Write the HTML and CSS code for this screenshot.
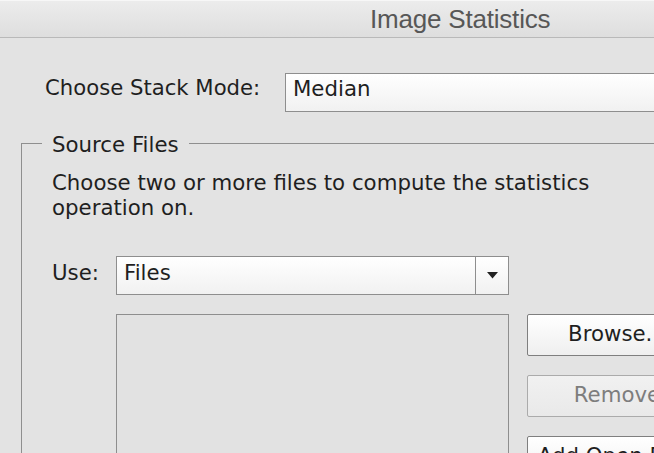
FILE: index.html
```html
<!DOCTYPE html>
<html>
<head>
<meta charset="utf-8">
<link rel="stylesheet" href="styles.css">
</head>
<body>
<div class="window">
  <div class="titlebar"><span class="title">Image Statistics</span></div>
  <div class="content">
    <div class="mode-row">
      <span class="mode-label">Choose Stack Mode:</span>
      <div class="select mode-select">Median</div>
    </div>
    <fieldset class="source">
      <legend class="source-legend">Source Files</legend>
      <p class="desc">Choose two or more files to compute the statistics<br>operation on.</p>
      <div class="files-grid">
        <span class="use-label">Use:</span>
        <div class="select use-select">
          <span class="use-value">Files</span>
          <span class="arrow-box"><svg width="11" height="7" viewBox="0 0 11 7"><path d="M0 0H11L5.5 6.5Z" fill="#222"/></svg></span>
        </div>
        <div class="file-list"></div>
        <div class="buttons">
          <div class="btn">Browse...</div>
          <div class="btn btn-disabled">Remove</div>
          <div class="btn">Add Open Files</div>
        </div>
      </div>
    </fieldset>
  </div>
</div>
</body>
</html>
```
FILE: styles.css
```css
html, body {
  margin: 0;
  padding: 0;
}
body {
  width: 654px;
  height: 453px;
  overflow: hidden;
  background: #e3e3e3;
  font-family: "DejaVu Sans", "Liberation Sans", sans-serif;
  color: #1f1f1f;
}
.window {
  width: 900px;
}
.titlebar {
  height: 38px;
  border-top: 1px solid #f7f7f7;
  box-sizing: border-box;
  border-bottom: 1px solid #b9b9b9;
  background: linear-gradient(#ececec, #dedede);
  padding-left: 370px;
}
.title {
  font-family: "Liberation Sans", Arial, sans-serif;
  font-size: 26px;
  line-height: 37px;
  color: #575757;
  letter-spacing: -0.2px;
}
.content {
  padding-top: 35px;
}
.mode-row {
  display: flex;
  align-items: flex-start;
  padding-left: 45px;
}
.mode-label {
  width: 240px;
  font-size: 21.2px;
  line-height: 24px;
  margin-top: 3px;
}
.select {
  box-sizing: border-box;
  height: 39px;
  border: 1px solid #8e8e8e;
  background: linear-gradient(#ffffff, #f1f1f1);
  font-size: 21.3px;
  line-height: 24px;
}
.mode-select {
  width: 420px;
  padding: 3px 0 0 7px;
}
.source {
  margin: 18px 0 0 21px;
  padding: 0 0 0 30px;
  border: 1px solid #8f8f8f;
  width: 800px;
  height: 400px;
  box-sizing: border-box;
}
.source-legend {
  margin-left: -10px;
  padding: 3px 10px 0;
  font-size: 21.3px;
  line-height: 24px;
}
.desc {
  margin: 13px 0 0;
  font-size: 21.3px;
  line-height: 25px;
}
.files-grid {
  display: grid;
  grid-template-columns: 64px 393px 18px 180px;
  row-gap: 19px;
  margin-top: 36px;
}
.use-label {
  font-size: 21.3px;
  line-height: 24px;
  padding-top: 5px;
}
.use-select {
  display: flex;
  padding: 0;
}
.use-value {
  flex: 1;
  padding: 4px 0 0 7px;
}
.arrow-box {
  width: 32px;
  border-left: 1px solid #8e8e8e;
  display: flex;
  align-items: center;
  justify-content: center;
}
.file-list {
  grid-column: 2;
  height: 160px;
  border: 1px solid #8e8e8e;
  background: #e2e2e2;
}
.buttons {
  grid-column: 4;
  display: flex;
  flex-direction: column;
  gap: 19px;
}
.btn {
  box-sizing: border-box;
  height: 42px;
  border: 1px solid #7f7f7f;
  border-radius: 2px;
  background: linear-gradient(#ffffff, #efefef);
  font-size: 21.3px;
  line-height: 24px;
  padding-top: 7px;
  text-align: center;
  white-space: nowrap;
}
.btn-disabled {
  border-color: #ababab;
  background: linear-gradient(#f1f1f1, #e9e9e9);
  color: #7d7d7d;
}
```
